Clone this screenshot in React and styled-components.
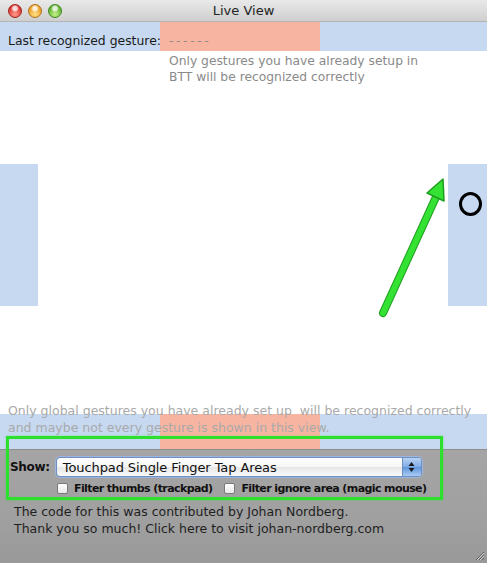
import styled, { createGlobalStyle } from "styled-components";

const GlobalStyle = createGlobalStyle`
  html, body {
    margin: 0;
    padding: 0;
    background: #ffffff;
  }
  body {
    font-family: "DejaVu Sans", "Liberation Sans", sans-serif;
  }
`;

const Window = styled.div`
  position: relative;
  width: 487px;
  height: 563px;
  display: flex;
  flex-direction: column;
  overflow: hidden;
  background: #ffffff;
`;

const TitleBar = styled.div`
  height: 22px;
  flex: none;
  display: flex;
  align-items: center;
  position: relative;
  background: linear-gradient(#e9e9e9, #cfcfcf);
  border-bottom: 1px solid #b4b4b4;
  box-sizing: border-box;
`;

const Lights = styled.div`
  display: flex;
  gap: 6px;
  padding-left: 8px;
  padding-top: 1px;
`;

const Light = styled.span`
  width: 14px;
  height: 14px;
  border-radius: 50%;
  box-sizing: border-box;
  border: 1px solid ${(p) => p.$edge};
  background: radial-gradient(circle at 50% 28%, #ffffffcc 0 2px, transparent 4px),
    radial-gradient(circle at 50% 78%, ${(p) => p.$glow} 0, ${(p) => p.$base} 72%);
`;

const Title = styled.div`
  position: absolute;
  left: 0;
  right: 0;
  text-align: center;
  font-size: 13px;
  color: #222;
`;

const Canvas = styled.div`
  position: relative;
  height: 427px;
  flex: none;
  display: flex;
  flex-direction: column;
`;

const Zone = styled.div`
  position: absolute;
  background: ${(p) => (p.$hot ? "#f7b5a1" : "#c6d9f1")};
`;

const GestureRow = styled.div`
  position: relative;
  padding: 11px 0 0 8px;
  font-size: 12.4px;
  line-height: 16px;
  color: #1a1a1a;
  display: flex;
  gap: 8px;
`;

const Dashes = styled.span`
  color: #8c8c8c;
  letter-spacing: 2.6px;
`;

const Hint = styled.div`
  position: relative;
  margin: 4px 0 0 169px;
  font-size: 12.3px;
  line-height: 16px;
  color: #8a8a8a;
`;

const Notice = styled.div`
  position: relative;
  margin-top: auto;
  padding: 0 0 13px 8px;
  font-size: 12.5px;
  line-height: 17px;
  color: #a9a9a9;
`;

const Touch = styled.span`
  position: absolute;
  left: 459px;
  top: 170px;
  width: 23px;
  height: 24px;
  border: 3px solid #000;
  border-radius: 50%;
  box-sizing: border-box;
`;

const Arrow = styled.svg`
  position: absolute;
  left: 370px;
  top: 143px;
`;

const Panel = styled.div`
  flex: 1;
  background: linear-gradient(#a5a5a5, #a0a0a0 60%, #999999);
  border-top: 1px solid #8f8f8f;
  box-sizing: border-box;
  padding: 7px 0 0 10px;
  position: relative;
`;

const ShowRow = styled.div`
  display: flex;
  align-items: center;
  gap: 6px;
  height: 20px;
`;

const ShowLabel = styled.span`
  font-weight: bold;
  font-size: 12px;
  letter-spacing: -0.3px;
  color: #111;
`;

const Select = styled.div`
  width: 366px;
  height: 20px;
  box-sizing: border-box;
  border: 1px solid #6f8fc0;
  border-radius: 4px;
  background: linear-gradient(#ffffff, #f6f6f6 50%, #e6e6e6 51%, #fafafa);
  box-shadow: 0 0 0 1px #9db6df;
  display: flex;
  align-items: center;
  overflow: hidden;
`;

const SelectText = styled.span`
  flex: 1;
  padding-left: 6px;
  font-size: 13px;
  letter-spacing: -0.1px;
  color: #111;
`;

const Stepper = styled.span`
  width: 18px;
  height: 100%;
  border-left: 1px solid #6f8fc0;
  background: linear-gradient(#b8d3f5, #7fabe6 50%, #5f95dc 51%, #a9cbf4);
  display: flex;
  align-items: center;
  justify-content: center;
`;

const Checks = styled.div`
  display: flex;
  gap: 12px;
  margin: 5px 0 0 47px;
`;

const Check = styled.label`
  display: flex;
  align-items: center;
  gap: 6px;
  font-size: 11px;
  font-weight: bold;
  letter-spacing: -0.6px;
  color: #111;
`;

const Box = styled.span`
  width: 11px;
  height: 11px;
  box-sizing: border-box;
  border: 1px solid #7a7a7a;
  border-radius: 2px;
  background: linear-gradient(#ffffff, #e8e8e8);
`;

const Credits = styled.div`
  margin: 8px 0 0 4px;
  font-size: 12.5px;
  line-height: 17px;
  color: #1e1e1e;
`;

const Highlight = styled.div`
  position: absolute;
  left: 6px;
  top: 436px;
  width: 437px;
  height: 64px;
  box-sizing: border-box;
  border: 3px solid #2ee02e;
  box-shadow: 0 0 2px #2ee02e80;
  pointer-events: none;
`;

const Grip = styled.svg`
  position: absolute;
  right: 2px;
  bottom: 2px;
`;

const zones = [
  { l: 0, t: 0, w: 487, h: 29 },
  { l: 160, t: 0, w: 160, h: 29, hot: true },
  { l: 0, t: 142, w: 38, h: 142 },
  { l: 448, t: 142, w: 39, h: 142 },
  { l: 0, t: 392, w: 487, h: 35 },
  { l: 160, t: 392, w: 160, h: 35, hot: true },
];

export default function App() {
  return (
    <>
      <GlobalStyle />
      <Window>
        <TitleBar>
          <Lights>
            <Light $base="#d8302a" $glow="#ff9a8a" $edge="#a3201c" />
            <Light $base="#e89a1c" $glow="#ffe08a" $edge="#b2721a" />
            <Light $base="#5aac2c" $glow="#c6f28c" $edge="#3f8a1e" />
          </Lights>
          <Title>Live View</Title>
        </TitleBar>

        <Canvas>
          {zones.map((z, i) => (
            <Zone
              key={i}
              $hot={z.hot}
              style={{ left: z.l, top: z.t, width: z.w, height: z.h }}
            />
          ))}
          <GestureRow>
            Last recognized gesture: <Dashes>------</Dashes>
          </GestureRow>
          <Hint>
            Only gestures you have already setup in
            <br />
            BTT will be recognized correctly
          </Hint>
          <Touch />
          <Arrow width="80" height="155" viewBox="0 0 80 155">
            <path
              d="M13 148 L66 32"
              stroke="#1e9e1e"
              strokeWidth="8"
              strokeLinecap="round"
            />
            <path
              d="M13 148 L66 32"
              stroke="#33e233"
              strokeWidth="6"
              strokeLinecap="round"
            />
            <path
              d="M73 14 L57 28 L74 36 Z"
              fill="#33e233"
              stroke="#1e9e1e"
              strokeWidth="1.5"
              strokeLinejoin="round"
            />
          </Arrow>
          <Notice>
            Only global gestures you have already set up&nbsp; will be recognized correctly
            <br />
            and maybe not every gesture is shown in this view.
          </Notice>
        </Canvas>

        <Panel>
          <ShowRow>
            <ShowLabel>Show:</ShowLabel>
            <Select>
              <SelectText>Touchpad Single Finger Tap Areas</SelectText>
              <Stepper>
                <svg width="7" height="12" viewBox="0 0 7 12">
                  <path d="M3.5 1 L6.5 5 H0.5 Z M3.5 11 L6.5 7 H0.5 Z" fill="#1a1a1a" />
                </svg>
              </Stepper>
            </Select>
          </ShowRow>
          <Checks>
            <Check>
              <Box />
              Filter thumbs (trackpad)
            </Check>
            <Check>
              <Box />
              Filter ignore area (magic mouse)
            </Check>
          </Checks>
          <Credits>
            The code for this was contributed by Johan Nordberg.
            <br />
            Thank you so much! Click here to visit johan-nordberg.com
          </Credits>
          <Grip width="12" height="12" viewBox="0 0 12 12">
            <path d="M11 3 L3 11 M11 6 L6 11 M11 9 L9 11" stroke="#5e5e5e" strokeWidth="1" />
            <path d="M11 4 L4 11 M11 7 L7 11" stroke="#d0d0d0" strokeWidth="1" />
          </Grip>
        </Panel>

        <Highlight />
      </Window>
    </>
  );
}
